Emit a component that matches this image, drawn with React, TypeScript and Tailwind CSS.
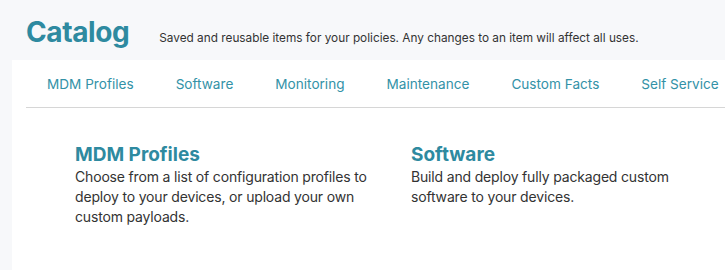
const tabs = ["MDM Profiles", "Software", "Monitoring", "Maintenance", "Custom Facts", "Self Service"];

const cards = [
  {
    title: "MDM Profiles",
    body: "Choose from a list of configuration profiles to deploy to your devices, or upload your own custom payloads.",
  },
  {
    title: "Software",
    body: "Build and deploy fully packaged custom software to your devices.",
  },
];

export default function App() {
  return (
    <div className="min-h-[270px] bg-[#f7f8fa] font-['Inter',sans-serif] flex flex-col">
      {/* header */}
      <div className="flex items-baseline pl-[26px] pt-[14px] pb-[10px]">
        <h1 className="text-[28px] leading-9 font-bold text-[#2e8aa0] tracking-[-0.4px]">Catalog</h1>
        <p className="ml-[30px] text-[11.8px] text-[#333]">
          Saved and reusable items for your policies. Any changes to an item will affect all uses.
        </p>
      </div>

      <div className="ml-3 flex-1 bg-white pl-[14px]">
        {/* tabs */}
        <nav className="flex h-12 items-center border-b border-[#d6d6d6] whitespace-nowrap overflow-hidden">
          {tabs.map((t) => (
            <button key={t} className="px-[21px] pt-[2px] text-[13.6px] text-[#3392a7]">
              {t}
            </button>
          ))}
        </nav>

        {/* cards */}
        <div className="flex pl-[49px] pt-[35px] pb-10">
          {cards.map((c) => (
            <div key={c.title} className="w-[336px] shrink-0">
              <h2 className="text-[19px] leading-6 font-bold text-[#2e8aa0]">{c.title}</h2>
              <p className="max-w-[300px] text-sm leading-5 tracking-[-0.17px] text-[#333]">{c.body}</p>
            </div>
          ))}
        </div>
      </div>
    </div>
  );
}
